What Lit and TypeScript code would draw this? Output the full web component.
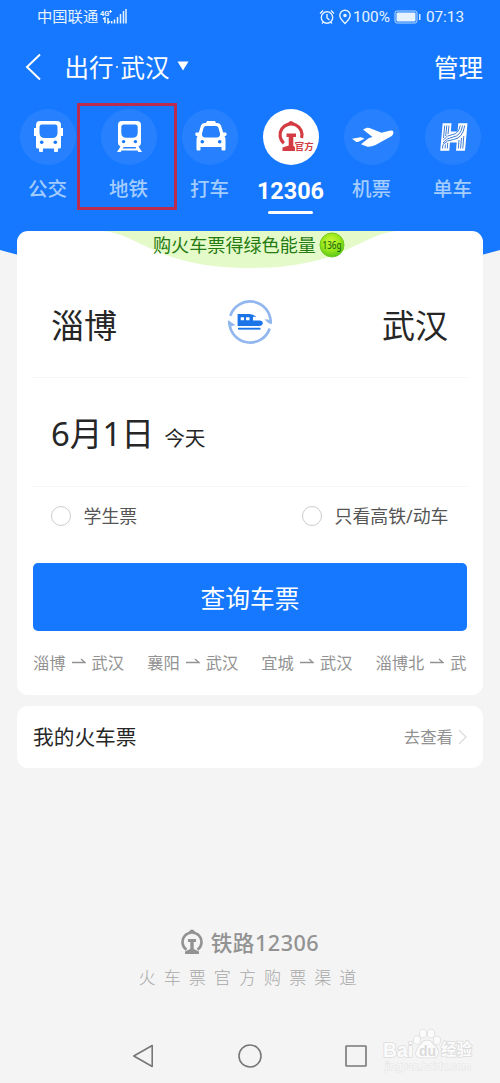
import { LitElement, html, css, svg } from "lit";
import { customElement } from "lit/decorators.js";

const blue = "#1678ff";

const busIcon = svg`
  <path fill="#fff" fill-rule="evenodd" d="M20 12H37Q41 12 41 16V19H43V27H41V38Q41 39.500 39.500 39.500H38V42Q38 43 37 43H35Q34 43 34 42V39.500H23V42Q23 43 22 43H20Q19 43 19 42V39.500H17.500Q16 39.500 16 38V27H14V19H16V16Q16 12 20 12ZM21.500 15.500Q19.500 15.500 19.500 18V24Q19.500 29 25 29H32Q37.500 29 37.500 24V18Q37.500 15.500 35.500 15.500Z"/>
  <circle cx="21.700" cy="33.200" r="1.800" fill="${blue}"/><circle cx="35.300" cy="33.200" r="1.800" fill="${blue}"/>`;

const metroIcon = svg`
  <path fill="#fff" fill-rule="evenodd" d="M21 12H36Q40 12 40 16V34Q40 36.500 37.500 37.500L41 43H37.300L36.500 41.500H20.500L19.700 43H16L19.500 37.500Q17 36.500 17 34V16Q17 12 21 12ZM22.500 15.500Q20.300 15.500 20.300 18V23.500Q20.300 28.800 25.500 28.800H31.500Q36.700 28.800 36.700 23.500V18Q36.700 15.500 34.500 15.500ZM22.500 38L21.700 39.500H35.300L34.500 38Z"/>
  <circle cx="22.600" cy="32.600" r="1.700" fill="${blue}"/><circle cx="34.400" cy="32.600" r="1.700" fill="${blue}"/>`;

const taxiIcon = svg`
  <path fill="#fff" fill-rule="evenodd" d="M25 12H33L34 14H35.500Q38.300 14 39 16.500L41.200 23.500H43.500Q44.700 23.500 44.700 25T43.500 27H42.500Q43.500 28.500 43.500 31V40.500Q43.500 41.500 42.500 41.500H40.500Q39.500 41.500 39.500 40.500V38H18.500V40.500Q18.500 41.500 17.500 41.500H15.500Q14.500 41.500 14.500 40.500V31Q14.500 28.500 15.500 27H14.500Q13.300 27 13.300 25T14.500 23.500H16.800L19 16.500Q19.700 14 22.500 14H24ZM24 17Q22 17 21.500 19L20 24.500Q19.500 28.500 23.500 28.500H34.500Q38.500 28.500 38 24.500L36.500 19Q36 17 34 17Z"/>
  <circle cx="20.300" cy="32.800" r="1.800" fill="${blue}"/><circle cx="37.700" cy="32.800" r="1.800" fill="${blue}"/>`;

const railIcon = svg`
  <path d="M20.800 34.200A11 11 0 1 1 38.600 29" fill="none" stroke="#d23c42" stroke-width="3.200"/>
  <path fill="#d23c42" d="M25 14.500Q25.500 12 28 12T31 14.500ZM23.500 24.500H33V28H30.300V36.500L32 38.500V42H19.500V38.500L25.700 36.500V28H23.500Z"/>
  <text x="31.800" y="41" font-size="9.400" font-weight="700" fill="#d23c42" stroke="#fff" stroke-width="1.600" paint-order="stroke">官方</text>`;

const planeIcon = svg`
  <path fill="#fff" d="M8 29.800L16.500 28.200Q18 28 20.500 29.700L14 33Q13 33.300 12 32.700ZM17 35.300L23.500 30Q24.500 29 26 28.800L28.500 28L19 20.500L23 18.800Q24 18.500 25.500 19L37.500 23.700L45.500 21.800Q48.700 21.200 49.300 22.500Q50 26 46 28L31.500 36Q27.500 38 23.500 37.800Z"/>`;

const bikeIcon = svg`
  <path d="M17.700 14.300H26.500L25.800 22.500H32.500L33.300 14.300H42.500L40 41.700H31L31.700 33.500H25L24.300 41.700H15.200Z" fill="#fff"/>
  <g fill="none" stroke="#2a6fd0" stroke-width="0.900">
    <path d="M19.700 16.500L18.500 29M21.800 16.500L20.700 27M24 16.500L23 25"/>
    <path d="M18.300 31Q22 26 27.500 25.500Q33.500 25 35.200 16.500"/>
    <path d="M18 34Q22 28.800 28 28Q36 27 37.500 16.500"/>
    <path d="M17.500 39.500L18 35.500Q22 31 28.500 30.500Q38 29 39.700 16.500"/>
    <path d="M20 39.500L20.500 35.500M22.300 39.500L22.700 34M33.300 39.500L34 31M35.500 39.500L36.500 29M37.800 39.500L38.800 27"/>
  </g>`;

const tabs = [
  { label: "公交", icon: busIcon },
  { label: "地铁", icon: metroIcon, marked: true },
  { label: "打车", icon: taxiIcon },
  { label: "12306", icon: railIcon, active: true },
  { label: "机票", icon: planeIcon },
  { label: "单车", icon: bikeIcon },
];

const recent = [["淄博", "武汉"], ["襄阳", "武汉"], ["宜城", "武汉"], ["淄博北", "武汉"]];

@customElement("app-root")
export class AppRoot extends LitElement {
  static styles = css`
    :host { display: block; font-family: "Noto Sans", "Noto Sans CJK SC", sans-serif; color: #262626; }
    * { box-sizing: border-box; }
    svg { display: block; flex: none; }
    .page { display: flex; flex-direction: column; height: 1083px; overflow: hidden; background: #f4f4f4; white-space: nowrap; }
    .header { flex: none; height: 290px; background: #1678ff; color: #fff; clip-path: path("M0 0H500V250Q250 320 0 250Z"); }
    .status { display: flex; align-items: center; height: 34px; padding: 0 36px 0 37px; font: 15.300px/34px Roboto, "Noto Sans CJK SC", sans-serif; color: #e6f3ff; }
    .signal { margin-left: 2px; }
    .status-right { display: flex; align-items: center; margin-left: auto; }
    .time { margin-left: 5px; }
    .titlebar { display: flex; align-items: center; height: 66px; padding: 0 17px 0 25px; font: 24.500px/66px "Noto Sans CJK SC", sans-serif; }
    .place { display: flex; margin-left: 22.500px; }
    .dot { width: 7px; display: flex; align-items: center; justify-content: center; }
    .dot::before { content: ""; width: 2.500px; height: 2.500px; border-radius: 50%; background: #fff; }
    .caret { margin-left: 7px; }
    .manage { margin-left: auto; }
    .tabs { display: flex; padding: 9px 0 0 7px; }
    .tab { position: relative; flex: none; width: 81px; display: flex; flex-direction: column; align-items: center; }
    .disc { width: 56px; height: 56px; border-radius: 50%; background: #2781ff; font-family: "Noto Sans CJK SC", sans-serif; }
    .tab-label { margin-top: 10px; font: 500 19.500px/26px "Noto Sans CJK SC", sans-serif; color: #a3ccff; }
    .active .disc { background: #fff; }
    .active .tab-label { padding-top: 3px; font: 700 23.400px/26px Roboto, sans-serif; color: #fff; }
    .bar { width: 45px; height: 3px; margin-top: 7px; border-radius: 2px; background: #fff; }
    .marker { position: absolute; left: -11px; top: -6px; width: 100px; height: 107px; border: 3px solid #ba2b50; }
    .cards { position: relative; display: flex; flex-direction: column; gap: 11px; margin: -59px 17px 0; }
    .card { background: #fff; border-radius: 11px; overflow: hidden; }
    .search { height: 464px; }
    .promo { display: grid; height: 37px; }
    .promo > * { grid-area: 1 / 1; }
    .promo-text { display: flex; align-items: center; height: 28px; padding-left: 136px; font-size: 18.100px; line-height: 28px; color: #267a12; }
    .promo-label { margin-top: -1px; }
    .badge { margin-left: 3px; overflow: visible; }
    .route { display: flex; align-items: center; justify-content: space-between; height: 110px; margin: 0 16px; padding: 0 19px 0 18px; border-bottom: 1px solid #f5f5f5; font: 33px/48px "Noto Sans CJK SC", sans-serif; }
    .city { padding-top: 2px; }
    .swap { margin-bottom: 2px; }
    .date { display: flex; align-items: baseline; height: 109px; margin: 0 16px; padding: 32px 18px 0; border-bottom: 1px solid #f5f5f5; font-size: 32.800px; line-height: 48px; }
    .today { margin-left: 10px; font-size: 20.700px; }
    .options { display: flex; justify-content: space-between; height: 59px; padding: 0 34.500px 0 34px; font-size: 17.900px; color: #555; }
    .option { display: flex; align-items: center; gap: 12.500px; height: 58px; }
    .option-label { margin-top: -3px; }
    .radio { width: 20px; height: 20px; border: 1px solid #ccc; border-radius: 50%; }
    .submit { display: block; width: 434px; height: 68px; margin: 17px 16px 0; padding: 0; border: 0; border-radius: 5px; background: #1678ff; color: #fff; font: 24.700px/68px "Noto Sans CJK SC", sans-serif; }
    .recent { display: flex; gap: 23px; margin: 15px 16px 0; overflow: hidden; font: 16.300px/32px "Noto Sans CJK SC", sans-serif; color: #929292; }
    .trip { display: flex; align-items: center; gap: 6px; flex: none; }
    .tickets { display: flex; align-items: center; height: 62px; padding: 0 16px 2px; font-size: 20.700px; }
    .view { margin-left: auto; font-size: 16.400px; color: #929292; }
    .chevron { margin: 2px 0 0 5px; }
    .footer { display: flex; flex-direction: column; align-items: center; padding-top: 157px; color: #929292; }
    .brand { display: flex; align-items: center; gap: 8px; height: 34px; font-size: 21.600px; font-weight: 500; }
    .brand-name { margin-top: -2px; letter-spacing: 0.500px; }
    .slogan { margin-left: 3px; font: 300 17.100px/36px "Noto Sans CJK SC", sans-serif; letter-spacing: 8px; color: #a8a8a8; }
    .nav { display: flex; align-items: center; justify-content: space-between; margin-top: auto; height: 54px; padding: 0 132px; }
    .watermark { position: absolute; left: 381px; top: 1026px; font-family: "Liberation Sans", "Noto Sans CJK SC", sans-serif; }
  `;

  render() {
    return html`
      <div class="page">
        <header class="header">
          <div class="status">
            <span>中国联通</span>
            <svg class="signal" width="28" height="18" viewBox="0 0 28 18">
              <text x="0" y="7.500" font-size="7.500" font-weight="700" fill="#e6f3ff">4G</text>
              <path d="M10.500 2V5M9 3.500H12" stroke="#e6f3ff" stroke-width="1"/>
              <path d="M3 11L5 9.800V15M8 10V15L10 13.500M11.700 13V15.500M14.500 11.500V15.500M17.500 9V15.500M20.500 6V15.500M23.500 3V15.500M26 1V15.500" fill="none" stroke="#e6f3ff" stroke-width="1.500"/>
            </svg>
            <div class="status-right">
              <svg width="16" height="18" viewBox="0 0 16 18" fill="none" stroke="#e6f3ff" stroke-width="1.400"><circle cx="8" cy="9.500" r="5.700"/><path d="M8 6V10L10.500 12M1 5.500L4 2.500M15 5.500L12 2.500M4.500 14L3 15.500M11.500 14L13 15.500"/></svg>
              <svg width="18" height="18" viewBox="0 0 18 18" fill="none" stroke="#e6f3ff" stroke-width="1.400"><path d="M10 15.500C7 12.500 4.800 10 4.800 7.500A5.200 5.200 0 0 1 15.200 7.500C15.200 10 13 12.500 10 15.500Z"/><circle cx="10" cy="7.500" r="1.100" fill="#e6f3ff"/></svg>
              <span>100%</span>
              <svg width="28" height="14" viewBox="0 0 28 14"><rect x="5" y="1" width="22" height="12" rx="2" fill="none" stroke="#b8d9ff" stroke-width="1"/><rect x="6.500" y="2.500" width="19" height="9" rx="1" fill="#e6f3ff"/></svg>
              <svg width="3" height="8" viewBox="0 0 3 8"><rect x="1" y="1" width="1.500" height="6" fill="#d5e9ff"/></svg>
              <span class="time">07:13</span>
            </div>
          </div>
          <div class="titlebar">
            <svg width="17" height="28" viewBox="0 0 17 28"><path d="M15 1.500L2 14L15 26.500" fill="none" stroke="#fff" stroke-width="2"/></svg>
            <div class="place"><span>出行</span><span class="dot"></span><span>武汉</span></div>
            <svg class="caret" width="12" height="14" viewBox="0 0 12 14"><path d="M0.500 1.500H11.500L6 10.500Z" fill="#fff"/></svg>
            <span class="manage">管理</span>
          </div>
          <nav class="tabs">
            ${tabs.map((t) => html`
              <div class="tab ${t.active ? "active" : ""}">
                <div class="disc"><svg width="56" height="56" viewBox="0 0 56 56">${t.icon}</svg></div>
                <span class="tab-label">${t.label}</span>
                ${t.active ? html`<div class="bar"></div>` : ""}
                ${t.marked ? html`<div class="marker"></div>` : ""}
              </div>`)}
          </nav>
        </header>

        <main class="cards">
          <section class="card search">
            <div class="promo">
              <svg width="466" height="37" viewBox="0 0 466 37"><path d="M86 0C125 4 140 37 233 37S341 4 380 0Z" fill="#e4fac8"/></svg>
              <div class="promo-text">
                <span class="promo-label">购火车票得绿色能量</span>
                <svg class="badge" width="26" height="26" viewBox="0 0 26 26">
                  <defs><radialGradient id="energy" cx="45%" cy="35%" r="65%"><stop offset="0" stop-color="#c9f83a"/><stop offset="0.600" stop-color="#98e61b"/><stop offset="1" stop-color="#58c71b"/></radialGradient></defs>
                  <circle cx="13" cy="13" r="12" fill="url(#energy)" stroke="#70c91c"/>
                  <text x="13" y="17" text-anchor="middle" font-size="11.500" font-weight="500" textLength="19" lengthAdjust="spacingAndGlyphs" fill="#216d0b">136g</text>
                </svg>
              </div>
            </div>
            <div class="route">
              <span class="city">淄博</span>
              <svg class="swap" width="48" height="48" viewBox="0 0 48 48">
                <g fill="none" stroke="#92b7ef" stroke-width="2.700"><path d="M4.300 17.800A20.700 20.700 0 0 1 44.700 24"/><path d="M43.700 30.500A20.700 20.700 0 0 1 3.400 24"/></g>
                <path d="M46 26V22L38.800 21.200Q41.500 25.800 46 26ZM2 22L9.500 27.200L5 28.200L2 26.500Z" fill="#92b7ef"/>
                <path fill="#1b75e8" fill-rule="evenodd" d="M11.600 16H23.500Q27.500 16.200 30.500 18.800H27V22.500H34Q37 23 36.800 25.300Q36.500 28 33 28H11.600ZM14.700 19.200V22.300H18V19.200ZM20 19.200V22.300H23.500V19.200Z"/>
                <path d="M12 30.700H34.500" stroke="#1b75e8" stroke-width="1.900"/>
              </svg>
              <span class="city">武汉</span>
            </div>
            <div class="date"><span>6月1日</span><span class="today">今天</span></div>
            <div class="options">
              <div class="option"><span class="radio"></span><span class="option-label">学生票</span></div>
              <div class="option"><span class="radio"></span><span class="option-label">只看高铁/动车</span></div>
            </div>
            <button class="submit">查询车票</button>
            <div class="recent">
              ${recent.map(([from, to]) => html`
                <div class="trip"><span>${from}</span><svg width="14" height="8" viewBox="0 0 14 8"><path d="M0 4.500H13L9 1" fill="none" stroke="#929292" stroke-width="1.300"/></svg><span>${to}</span></div>`)}
            </div>
          </section>
          <section class="card tickets">
            <span>我的火车票</span><span class="view">去查看</span>
            <svg class="chevron" width="9" height="16" viewBox="0 0 9 16"><path d="M1 1L8 8L1 15" fill="none" stroke="#d9d9d9" stroke-width="1.100"/></svg>
          </section>
        </main>

        <footer class="footer">
          <div class="brand">
            <svg width="22" height="26" viewBox="0 0 22 26"><path d="M5.500 20.800A9.500 9.500 0 1 1 16.500 20.800" fill="none" stroke="#929292" stroke-width="2.600"/><path d="M8 3Q8.500 0.500 11 0.500T14 3ZM7 10H15V13H12.700V20L18 22.500V25H4V22.500L9.300 20V13H7Z" fill="#929292"/></svg>
            <span class="brand-name">铁路12306</span>
          </div>
          <div class="slogan">火车票官方购票渠道</div>
        </footer>
        <div class="nav">
          <svg width="22" height="26" viewBox="0 0 22 26"><path d="M1.800 13L20.200 2.500V23.500Z" fill="none" stroke="#777" stroke-width="1.600" stroke-linejoin="round"/></svg>
          <svg width="26" height="26" viewBox="0 0 26 26"><circle cx="14" cy="13" r="11" fill="none" stroke="#777" stroke-width="1.600"/></svg>
          <svg width="24" height="26" viewBox="0 0 24 26"><rect x="2" y="3" width="20" height="20" rx="0.500" fill="none" stroke="#777" stroke-width="1.600"/></svg>
        </div>
        <svg class="watermark" width="98" height="48" viewBox="0 0 98 48">
          <g fill="#fbfbfb" stroke="#dcdcdc" stroke-width="1.600" paint-order="stroke">
            <text x="2" y="31" font-size="21" font-weight="700" textLength="30" lengthAdjust="spacingAndGlyphs">Bai</text>
            <ellipse cx="36" cy="14" rx="3.200" ry="4"/><ellipse cx="42" cy="7.500" rx="3.200" ry="4"/><ellipse cx="50" cy="7.500" rx="3.200" ry="4"/><ellipse cx="56" cy="14.500" rx="3.200" ry="4"/>
            <path d="M46 14.500Q50 14.500 52 18.500Q58 23 57 28Q56 32 51 31.500H41Q35 32 35 27Q36 22 40 18.500Q42 14.500 46 14.500Z"/>
            <text x="60" y="29" font-size="15.500" font-weight="700" textLength="31" lengthAdjust="spacingAndGlyphs">经验</text>
          </g>
          <text x="38" y="30" font-size="14" font-weight="700" fill="#dadada">du</text>
          <text x="4" y="44" font-size="10" textLength="86" lengthAdjust="spacingAndGlyphs" fill="#fafafa" stroke="#e3e3e3" stroke-width="0.800" paint-order="stroke">jingyan.baidu.com</text>
        </svg>
      </div>
    `;
  }
}
